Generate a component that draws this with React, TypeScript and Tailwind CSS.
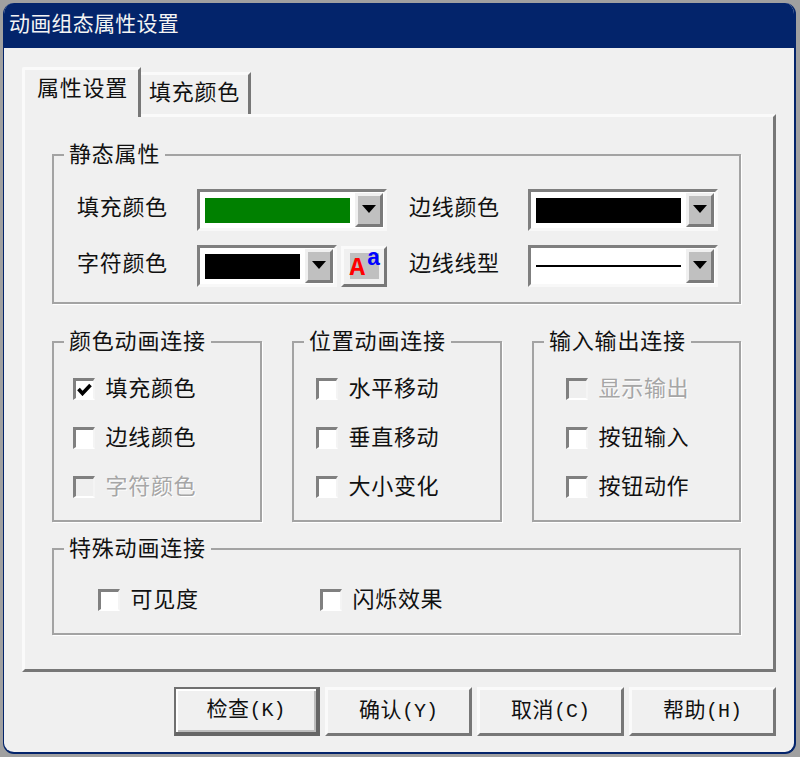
const cjk = "font-['Liberation_Mono','Noto_Sans_CJK_SC',monospace]"

function Group({ title, className, children }: { title: string; className: string; children: React.ReactNode }) {
  return (
    <div className={`relative border-2 border-[#a3a3a3] shadow-[1px_1px_0_#fff] ${className}`}>
      <span className="absolute left-[10px] top-[-12px] bg-[#f0f0f0] px-[5px] text-[22px] leading-[26px] tracking-[0.8px] text-[#111]">
        {title}
      </span>
      {children}
    </div>
  )
}

function Check({ label, checked, disabled, className }: { label: string; checked?: boolean; disabled?: boolean; className?: string }) {
  return (
    <div className={`flex h-[22px] items-center gap-[10.5px] ${className ?? ''}`}>
      <span
        className={`flex h-[22px] w-[22px] shrink-0 items-center justify-center border-2 border-t-[3px] border-l-[3px] border-t-[#808080] border-l-[#808080] border-r-[#f4f4f4] border-b-[#fff] ${disabled ? 'bg-[#efefef]' : 'bg-white'}`}
      >
        {checked && (
          <svg width="15" height="13" viewBox="0 0 15 13">
            <path d="M1.5 6 L5.5 10.5 L13.5 2" fill="none" stroke="#000" strokeWidth="3.6" />
          </svg>
        )}
      </span>
      <span
        className={`mt-[4px] text-[22px] leading-[26px] tracking-[0.7px] ${disabled ? 'text-[#a6a6a6] [text-shadow:1px_1px_0_#fff]' : 'text-[#111]'}`}
      >
        {label}
      </span>
    </div>
  )
}

function Combo({ className, children }: { className: string; children: React.ReactNode }) {
  return (
    <div
      className={`flex h-[42px] items-stretch border-[3px] border-t-[#7f7f7f] border-l-[#7f7f7f] border-r-[#f8f8f8] border-b-[#f8f8f8] bg-white ${className}`}
    >
      <div className="flex flex-1 items-center pl-[5px] pr-[5px]">{children}</div>
      <div className="my-px mr-px flex w-[28px] items-center justify-center border-[3px] border-t-[#f0f0f0] border-l-[#f0f0f0] border-r-[#7a7a7a] border-b-[#7a7a7a] bg-[#c0c0c0]">
        <svg width="14" height="8" viewBox="0 0 14 8" className="mb-[3px]">
          <path d="M0 0 H14 L7 8 Z" fill="#000" />
        </svg>
      </div>
    </div>
  )
}

function Button({ label, hot, isDefault }: { label: string; hot: string; isDefault?: boolean }) {
  return (
    <button
      className={`flex h-[49px] items-center justify-center bg-[#f0f0f0] text-[21px] leading-none text-[#111] ${
        isDefault
          ? 'w-[146px] border-2 border-r-[4px] border-b-[4px] border-t-[#707070] border-l-[#707070] border-r-[#666] border-b-[#666] shadow-[inset_2px_2px_0_#fff,inset_-2px_-2px_0_#bdbdbd]'
          : 'w-[147px] border-[3px] border-t-[#fafafa] border-l-[#fafafa] border-r-[#777] border-b-[#777]'
      }`}
    >
      <span className="tracking-[0.5px]">{label}</span>
      <span className="text-[20px]">({hot})</span>
    </button>
  )
}

export default function App() {
  return (
    <div className={`h-[757px] w-[800px] bg-[#a0a0a0] pl-[3px] pr-[4px] pt-[3px] pb-[3px] ${cjk}`}>
      <div className="flex h-full flex-col overflow-hidden rounded-[11px] border-b-2 border-l border-r-2 border-[#03246b] bg-[#f0f0f0]">
        {/* Title bar */}
        <div className="flex h-[45px] shrink-0 items-center bg-[#03246b] pl-[5px] text-[21px] tracking-[0.25px] text-[#f4f4f4]">
          动画组态属性设置
        </div>

        <div className="flex flex-1 flex-col pl-[18px] pr-[18px]">
          {/* Tabs */}
          <div className="mt-[19px] flex h-[47px] items-end">
            <div className="relative z-10 -mb-[3px] flex h-[50px] w-[119px] items-center justify-center rounded-tl-[2px] border-[3px] border-b-0 border-t-[#fafafa] border-l-[#fafafa] border-r-[#777] bg-[#f0f0f0] pb-[6px] pl-[2px] text-[22px] tracking-[0.7px] text-[#111]">
              属性设置
            </div>
            <div className="flex h-[42px] w-[110px] items-center justify-center border-[3px] border-b-0 border-l-0 border-t-[#fafafa] border-r-[#777] bg-[#f0f0f0] text-[22px] tracking-[0.7px] text-[#111]">
              填充颜色
            </div>
          </div>

          {/* Tab panel */}
          <div className="h-[558px] border-[3px] border-t-[#fafafa] border-l-[#fafafa] border-r-[#777] border-b-[#777] pl-[27px] pr-[32px] pt-[37px]">
            <Group title="静态属性" className="h-[150px] pl-[23px] pt-[33px]">
              <div className="flex flex-col gap-[14px]">
                <div className="flex items-center text-[22px] tracking-[0.7px] text-[#111]">
                  <span className="mb-[2px] w-[120px]">填充颜色</span>
                  <Combo className="w-[190px]">
                    <div className="h-[25px] w-full bg-[#008000]" />
                  </Combo>
                  <span className="mb-[2px] ml-[22px] w-[119px]">边线颜色</span>
                  <Combo className="w-[190px]">
                    <div className="h-[25px] w-full bg-black" />
                  </Combo>
                </div>
                <div className="flex items-center text-[22px] tracking-[0.7px] text-[#111]">
                  <span className="mb-[2px] w-[120px]">字符颜色</span>
                  <Combo className="w-[140px]">
                    <div className="h-[25px] w-full bg-black" />
                  </Combo>
                  <div className="ml-[4px] flex h-[41px] w-[46px] items-center justify-center border-[3px] border-t-[#fafafa] border-l-[#fafafa] border-r-[#777] border-b-[#777]">
                    <div className="relative h-[26px] w-[29px] bg-[#c0c0c0]">
                      <span className="absolute bottom-[-2px] left-0 font-['Liberation_Mono',monospace] text-[26px] font-bold leading-none tracking-normal text-[#ff0000]">
                        A
                      </span>
                      <span className="absolute right-[-2px] top-[-5px] font-['Liberation_Mono',monospace] text-[23px] font-bold leading-none tracking-normal text-[#0000ff]">
                        a
                      </span>
                    </div>
                  </div>
                  <span className="mb-[2px] ml-[22px] w-[119px]">边线线型</span>
                  <Combo className="w-[190px]">
                    <div className="h-[2px] w-full bg-black" />
                  </Combo>
                </div>
              </div>
            </Group>

            <div className="mt-[37px] flex gap-[30px]">
              <Group title="颜色动画连接" className="h-[181px] w-[210px] pl-[19px] pt-[35px]">
                <div className="flex flex-col gap-[27px]">
                  <Check label="填充颜色" checked />
                  <Check label="边线颜色" />
                  <Check label="字符颜色" disabled />
                </div>
              </Group>
              <Group title="位置动画连接" className="h-[181px] w-[210px] pl-[22px] pt-[35px]">
                <div className="flex flex-col gap-[27px]">
                  <Check label="水平移动" />
                  <Check label="垂直移动" />
                  <Check label="大小变化" />
                </div>
              </Group>
              <Group title="输入输出连接" className="h-[181px] w-[209px] pl-[32px] pt-[35px]">
                <div className="flex flex-col gap-[27px]">
                  <Check label="显示输出" disabled />
                  <Check label="按钮输入" />
                  <Check label="按钮动作" />
                </div>
              </Group>
            </div>

            <Group title="特殊动画连接" className="mt-[26px] h-[87px] pl-[44px] pt-[39px]">
              <div className="flex">
                <Check label="可见度" className="w-[222px]" />
                <Check label="闪烁效果" />
              </div>
            </Group>
          </div>

          {/* Dialog buttons */}
          <div className="mt-[15px] flex justify-end gap-[5px]">
            <Button label="检查" hot="K" isDefault />
            <Button label="确认" hot="Y" />
            <Button label="取消" hot="C" />
            <Button label="帮助" hot="H" />
          </div>
        </div>
      </div>
    </div>
  )
}
